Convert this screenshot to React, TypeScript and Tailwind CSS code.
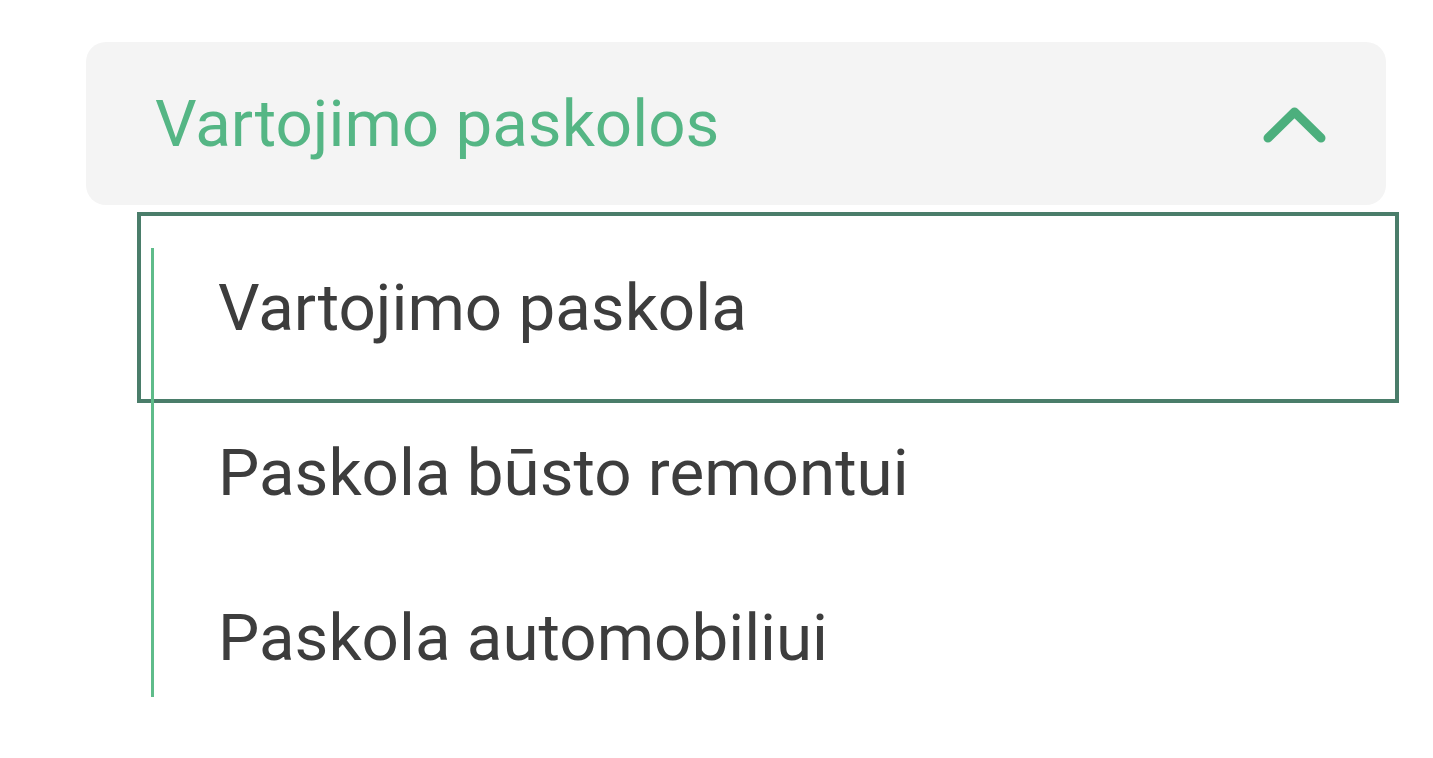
import { useState } from "react";

const items = ["Vartojimo paskola", "Paskola būsto remontui", "Paskola automobiliui"];

export default function App() {
  const [open, setOpen] = useState(true);

  return (
    <div className="min-h-screen bg-white pl-[86px] pt-[42px] font-['Roboto',sans-serif]">
      <div className="w-[1300px]">
        <button
          type="button"
          onClick={() => setOpen(!open)}
          className="flex h-[163px] w-full items-center justify-between rounded-[20px] bg-[#f4f4f4] pl-[69px] pr-[60px] text-left"
        >
          <span className="text-[65.5px] leading-none text-[#55b685]">Vartojimo paskolos</span>
          <svg width="63" height="40" viewBox="0 0 63 40" fill="none">
            <path d="M5 34 L31.5 8 L58 34" stroke="#4caf7d" strokeWidth="9" strokeLinecap="round" strokeLinejoin="round" />
          </svg>
        </button>

        {open && (
          <ul className="relative ml-[64px] mt-[20px]">
            <span className="absolute left-[1px] top-[23px] bottom-[23px] w-[2.5px] bg-[#5fbc8a]" />
            {items.map((item, i) => (
              <li key={item}>
                <a
                  href="#"
                  className={
                    "flex h-[165px] items-center pl-[68px] text-[65.5px] leading-none text-[#3d3d3d] " +
                    (i === 0 ? "outline-[4px] outline-offset-[9px] outline-solid outline-[#4a7d6a]" : "")
                  }
                >
                  {item}
                </a>
              </li>
            ))}
          </ul>
        )}
      </div>
    </div>
  );
}
